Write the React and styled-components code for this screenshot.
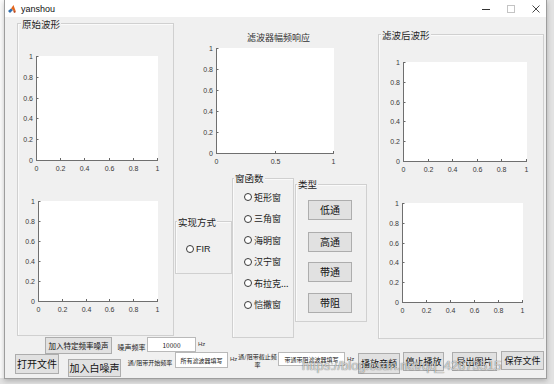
import styled, { createGlobalStyle } from "styled-components";

const GlobalStyle = createGlobalStyle`
  html, body {
    margin: 0;
    padding: 0;
  }
  body {
    width: 554px;
    height: 384px;
    overflow: hidden;
    background: #e2e2e2;
    font-family: "Noto Sans CJK SC", "Liberation Sans", sans-serif;
  }
`;

const Desktop = styled.div`
  display: flex;
  align-items: flex-start;
  width: 554px;
  height: 384px;
`;

const EditorEdge = styled.div`
  flex: none;
  width: 4px;
  height: 378px;
  background: #fbfbfb;
`;

const Window = styled.div`
  position: relative;
  flex: none;
  box-sizing: border-box;
  width: 543px;
  height: 379px;
  border: 1px solid #9d9d9d;
  border-top: none;
  background: #f0f0f0;
  display: flex;
  flex-direction: column;
  box-shadow: 0 2px 5px rgba(0, 0, 0, 0.22);
`;

const TitleBar = styled.div`
  flex: none;
  height: 17px;
  background: #fff;
  display: flex;
  align-items: center;
  padding-left: 3px;
`;

const AppName = styled.span`
  margin-left: 5px;
  font-family: "Liberation Sans", Arial, sans-serif;
  font-size: 9px;
  color: #111;
`;

const WinControls = styled.div`
  margin-left: auto;
  display: flex;
  align-items: center;
  gap: 17px;
  padding-right: 6px;
`;

const Content = styled.div`
  flex: 1;
  display: flex;
  flex-direction: column;
`;

const Main = styled.div`
  flex: none;
  height: 320px;
  display: flex;
  align-items: flex-start;
`;

const Panel = styled.div`
  position: relative;
  flex: none;
  box-sizing: border-box;
  width: ${(p) => p.$w}px;
  height: ${(p) => p.$h}px;
  margin: ${(p) => p.$mt || 0}px 0 0 ${(p) => p.$ml || 0}px;
  border: 1px solid #d0d0d0;
  box-shadow: inset 1px 1px 0 #fafafa;
  display: flex;
  flex-direction: column;
`;

const PanelTitle = styled.span`
  position: absolute;
  left: ${(p) => p.$x}px;
  top: ${(p) => p.$y}px;
  padding: 0 1px;
  background: #f0f0f0;
  font-size: 9.5px;
  line-height: 12px;
  color: #1e1e1e;
  white-space: nowrap;
`;

const MidCol = styled.div`
  flex: none;
  margin-left: 1px;
  display: flex;
  flex-direction: column;
`;

const PlotTitle = styled.div`
  margin: 15px 0 0 72px;
  font-size: 9px;
  line-height: 12px;
  color: #333;
  white-space: nowrap;
`;

const PanelRow = styled.div`
  display: flex;
  align-items: flex-start;
  margin-top: 12px;
`;

const RadioList = styled.div`
  display: flex;
  flex-direction: column;
  gap: 9.6px;
  padding: ${(p) => p.$pt}px 0 0 ${(p) => p.$pl}px;
`;

const RadioItem = styled.div`
  display: flex;
  align-items: center;
  gap: 2px;
  height: 12px;
  font-size: 9px;
  color: #222;
  white-space: nowrap;
  font-family: ${(p) =>
    p.$latin ? '"Liberation Sans", Arial, sans-serif' : '"Noto Sans CJK SC", sans-serif'};
`;

const Circle = styled.span`
  flex: none;
  box-sizing: border-box;
  width: 8px;
  height: 8px;
  border: 1px solid #3a3a3a;
  border-radius: 50%;
  background: #fff;
`;

const ButtonStack = styled.div`
  display: flex;
  flex-direction: column;
  padding-left: 12px;
`;

const Btn = styled.button`
  flex: none;
  box-sizing: border-box;
  width: ${(p) => p.$w}px;
  height: ${(p) => p.$h}px;
  margin: ${(p) => p.$mt || 0}px 0 0 ${(p) => p.$ml || 0}px;
  padding: 0;
  background: #e1e1e1;
  border: 1px solid #adadad;
  border-radius: 0;
  font-family: "Noto Sans CJK SC", sans-serif;
  font-size: ${(p) => p.$fs || 9}px;
  line-height: 1;
  color: #111;
  display: flex;
  align-items: center;
  justify-content: center;
  white-space: nowrap;
`;

const NoiseRow = styled.div`
  flex: none;
  height: 13px;
  display: flex;
  align-items: flex-start;
`;

const BottomRow = styled.div`
  flex: none;
  display: flex;
  align-items: flex-start;
`;

const Label = styled.span`
  flex: none;
  width: ${(p) => (p.$w ? `${p.$w}px` : "auto")};
  margin: ${(p) => p.$mt || 0}px 0 0 ${(p) => p.$ml || 0}px;
  font-size: ${(p) => p.$fs}px;
  line-height: ${(p) => p.$lh}px;
  color: #222;
  text-align: center;
  white-space: nowrap;
`;

const Unit = styled.span`
  flex: none;
  width: 8px;
  margin: ${(p) => p.$mt || 0}px 0 0 ${(p) => p.$ml || 0}px;
  font-family: "Liberation Sans", Arial, sans-serif;
  font-size: 6px;
  line-height: 10px;
  color: #333;
`;

const Edit = styled.input`
  flex: none;
  box-sizing: border-box;
  width: ${(p) => p.$w}px;
  height: ${(p) => p.$h}px;
  margin: ${(p) => p.$mt || 0}px 0 0 ${(p) => p.$ml || 0}px;
  padding: 0;
  background: #fff;
  border: 1px solid #b9b9b9;
  border-radius: 0;
  outline: none;
  text-align: center;
  font-family: "Noto Sans CJK SC", "Liberation Sans", sans-serif;
  font-size: ${(p) => p.$fs || 6}px;
  color: #222;
`;

/* CSDN watermark lying over the bottom controls */
const Watermark = styled.span`
  position: absolute;
  left: 297px;
  top: 358px;
  font-family: "Liberation Sans", Arial, sans-serif;
  font-size: 13px;
  color: rgba(255, 255, 255, 0.7);
  text-shadow: 0 0 1px rgba(0, 0, 0, 0.5), 0 0 1px rgba(0, 0, 0, 0.3);
  white-space: nowrap;
  pointer-events: none;
`;

const AxesSvg = styled.svg`
  display: block;
  flex: none;
  margin: ${(p) => p.$mt || 0}px 0 0 ${(p) => p.$ml || 0}px;
  overflow: visible;
  font-family: "Liberation Sans", Arial, sans-serif;
`;

function Axes({ w, h, xt, yt, ml, mt }) {
  const L = 16;
  const T = 4;
  const xAxis = T + h - 0.5;
  return (
    <AxesSvg width={w + 20} height={h + 16} $ml={ml} $mt={mt}>
      <rect x={L} y={T} width={w} height={h} fill="#fff" />
      {yt.map((t, i) => {
        const y = Math.round(T + h - 1 - ((h - 1) * i) / (yt.length - 1)) + 0.5;
        return (
          <g key={"y" + t}>
            <line x1={L} x2={L + 2.5} y1={y} y2={y} stroke="#666" />
            <text x={L - 3} y={y + 2.5} textAnchor="end" fontSize="7" fill="#3a3a3a">
              {t}
            </text>
          </g>
        );
      })}
      {xt.map((t, i) => {
        const x = Math.round(L + ((w - 1) * i) / (xt.length - 1)) + 0.5;
        return (
          <g key={"x" + t}>
            <line x1={x} x2={x} y1={xAxis} y2={xAxis - 2.5} stroke="#666" />
            <text x={x} y={T + h + 9.5} textAnchor="middle" fontSize="7" fill="#3a3a3a">
              {t}
            </text>
          </g>
        );
      })}
      <line x1={L + 0.5} x2={L + 0.5} y1={T} y2={T + h} stroke="#6f6f6f" />
      <line x1={L} x2={L + w} y1={xAxis} y2={xAxis} stroke="#6f6f6f" />
    </AxesSvg>
  );
}

const Y6 = ["0", "0.2", "0.4", "0.6", "0.8", "1"];
const X6 = ["0", "0.2", "0.4", "0.6", "0.8", "1"];

function MatlabLogo() {
  return (
    <svg width="8" height="8" viewBox="0 0 8 8">
      <polygon points="0,6 3,3.5 5,5 2,8" fill="#2f6fb0" />
      <polygon points="3,3.5 5.5,0 8,7 5,5" fill="#e3671f" />
      <polygon points="5,5 8,7 6,8" fill="#b33b12" />
    </svg>
  );
}

function WindowButtons() {
  return (
    <WinControls>
      <svg width="8" height="8" viewBox="0 0 8 8">
        <line x1="0" x2="8" y1="4.5" y2="4.5" stroke="#333" />
      </svg>
      <svg width="8" height="8" viewBox="0 0 8 8">
        <rect x="0.5" y="0.5" width="7" height="7" fill="none" stroke="#c4c4c4" />
      </svg>
      <svg width="8" height="8" viewBox="0 0 8 8">
        <path d="M0.5 0.5 L7.5 7.5 M7.5 0.5 L0.5 7.5" stroke="#333" strokeWidth="0.9" />
      </svg>
    </WinControls>
  );
}

const windows = ["矩形窗", "三角窗", "海明窗", "汉宁窗", "布拉克...", "恺撒窗"];
const types = [
  { t: "低通", mt: 15 },
  { t: "高通", mt: 12 },
  { t: "带通", mt: 10 },
  { t: "带阻", mt: 11 },
];

export default function App() {
  return (
    <>
      <GlobalStyle />
      <Desktop>
        <EditorEdge />
        <Window>
          <TitleBar>
            <MatlabLogo />
            <AppName>yanshou</AppName>
            <WindowButtons />
          </TitleBar>

          <Content>
            <Main>
              <Panel $w={157} $h={313} $ml={12} $mt={6}>
                <PanelTitle $x={3} $y={-6}>原始波形</PanelTitle>
                <Axes w={122} h={105} xt={X6} yt={Y6} ml={2} mt={28} />
                <Axes w={120} h={101} xt={X6} yt={Y6} ml={4} mt={24} />
              </Panel>

              <MidCol>
                <PlotTitle>滤波器幅频响应</PlotTitle>
                <Axes w={118} h={106} xt={["0", "0.5", "1"]} yt={Y6} ml={25} mt={0} />
                <PanelRow>
                  <Panel $w={57} $h={53} $mt={43}>
                    <PanelTitle $x={1} $y={-6}>实现方式</PanelTitle>
                    <RadioList $pt={21} $pl={10}>
                      <RadioItem $latin>
                        <Circle />
                        FIR
                      </RadioItem>
                    </RadioList>
                  </Panel>
                  <Panel $w={62} $h={160}>
                    <PanelTitle $x={1} $y={-7}>窗函数</PanelTitle>
                    <RadioList $pt={12} $pl={11}>
                      {windows.map((w) => (
                        <RadioItem key={w}>
                          <Circle />
                          {w}
                        </RadioItem>
                      ))}
                    </RadioList>
                  </Panel>
                  <Panel $w={72} $h={138} $ml={1} $mt={6}>
                    <PanelTitle $x={1} $y={-7}>类型</PanelTitle>
                    <ButtonStack>
                      {types.map((b) => (
                        <Btn key={b.t} $w={44} $h={20} $mt={b.mt} $fs={10}>
                          {b.t}
                        </Btn>
                      ))}
                    </ButtonStack>
                  </Panel>
                </PanelRow>
              </MidCol>

              <Panel $w={166} $h={305} $ml={11} $mt={17}>
                <PanelTitle $x={2} $y={-6}>滤波后波形</PanelTitle>
                <Axes w={124} h={100} xt={X6} yt={Y6} ml={8} mt={23} />
                <Axes w={121} h={100} xt={X6} yt={Y6} ml={7} mt={25} />
              </Panel>
            </Main>

            <NoiseRow>
              <Btn $w={67} $h={17} $ml={40} $fs={7.5}>
                加入特定频率噪声
              </Btn>
              <Label $fs={7} $lh={14} $ml={5} $mt={3} $w={29}>
                噪声频率
              </Label>
              <Edit $w={49} $h={15} $ml={1} readOnly value="10000" $fs={6.5} />
              <Unit $ml={2} $mt={2}>
                Hz
              </Unit>
            </NoiseRow>

            <BottomRow>
              <Btn $w={44} $h={20} $ml={10} $mt={4} $fs={10}>
                打开文件
              </Btn>
              <Btn $w={53} $h={18} $ml={9} $mt={9} $fs={10}>
                加入白噪声
              </Btn>
              <Label $fs={6} $lh={10} $ml={6} $mt={8} $w={46}>
                通/阻带开始频率
              </Label>
              <Edit $w={53} $h={16} $ml={2} $mt={2} readOnly value="所有滤波器填写" />
              <Unit $ml={2} $mt={4}>
                Hz
              </Unit>
              <Label $fs={6} $lh={8} $ml={0} $mt={3} $w={39}>
                通/阻带截止频
                <br />率
              </Label>
              <Edit $w={67} $h={14} $ml={1} $mt={2} readOnly value="带通带阻滤波器填写" />
              <Unit $ml={2} $mt={4}>
                Hz
              </Unit>
              <Btn $w={42} $h={21} $ml={3} $mt={3}>
                播放音频
              </Btn>
              <Btn $w={41} $h={19} $ml={3} $mt={2}>
                停止播放
              </Btn>
              <Btn $w={45} $h={19} $ml={8} $mt={2}>
                导出图片
              </Btn>
              <Btn $w={43} $h={19} $ml={4} $mt={1}>
                保存文件
              </Btn>
            </BottomRow>
          </Content>

          <Watermark>https://blog.csdn.net/qq_42673515</Watermark>
        </Window>
      </Desktop>
    </>
  );
}
